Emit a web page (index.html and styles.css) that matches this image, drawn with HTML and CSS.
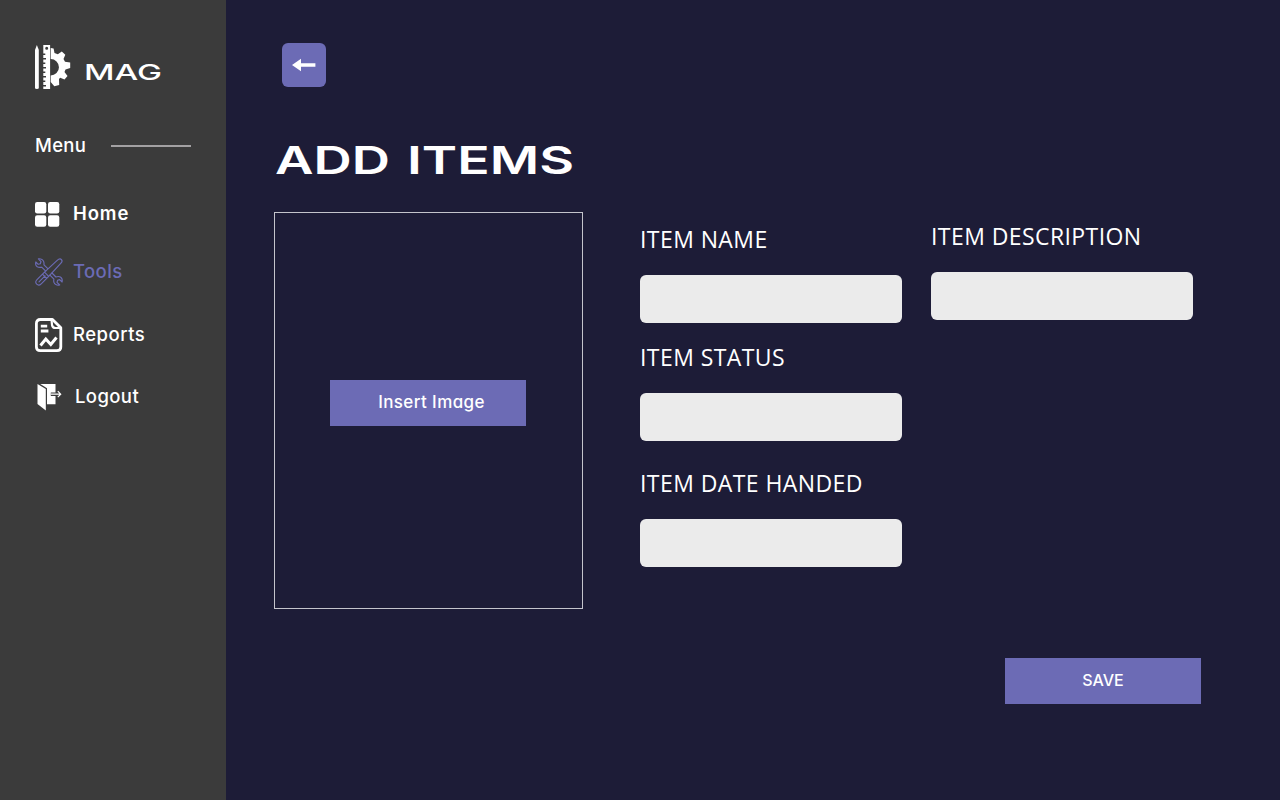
FILE: index.html
```html
<!DOCTYPE html>
<html lang="en">
<head>
<meta charset="utf-8">
<title>MAG - Add Items</title>
<link rel="stylesheet" href="styles.css">
</head>
<body>
<div class="app">
  <aside class="sidebar">
    <div class="brand">
      <svg class="brand-logo" width="36" height="45" viewBox="0 0 36 45" fill="#fff">
        <path d="M0 5L1.9 0L3.8 5V43Q3.8 44 1.9 44Q0 44 0 43Z"/>
        <path fill-rule="evenodd" d="M8.3 0H15.1V44H8.3V41.5H11V40H8.3V37H10.3V35.5H8.3V32.5H11V31H8.3V28H10.3V26.5H8.3V23.5H11V22H8.3V19H10.3V17.5H8.3V14.5H11V13H8.3V10H10.3V8.5H8.3ZM10.2 3.2A1.5 1.5 0 1 0 13.2 3.2A1.5 1.5 0 1 0 10.2 3.2Z"/>
        <path d="M15.7 3L18.6 3.5L19.5 8L22.8 9.3L26.8 6.6L30.3 9.8L28.5 14L30 16.8L35.2 17.6V23L30.5 24.5L29.5 27L32.5 31L29.5 34.5L25.2 32.8L24 34L24.2 40L19.3 41.2L15.7 37V30.5A8.2 8.2 0 0 0 15.7 14Z"/>
      </svg>
      <svg class="brand-name" width="78" height="24" viewBox="0 0 78 24"><text x="0" y="19.7" textLength="78" lengthAdjust="spacingAndGlyphs">MAG</text></svg>
    </div>
    <div class="menu-title"><span>Menu</span><i class="rule"></i></div>
    <nav class="nav">
      <a class="item home">
        <svg width="28" height="25" viewBox="0 0 28 25" fill="#fff"><rect x="0" y="0" width="11.3" height="11.5" rx="2.2"/><rect x="13" y="0" width="11.3" height="11.5" rx="2.2"/><rect x="0" y="13.2" width="11.3" height="11.5" rx="2.2"/><rect x="13" y="13.2" width="11.3" height="11.5" rx="2.2"/></svg>
        <span>Home</span>
      </a>
      <a class="item tools">
        <svg width="28" height="28" viewBox="0 0 28 28" fill="none" stroke="#6b6bb5" stroke-width="1.15" stroke-linejoin="round" stroke-linecap="round">
          <path d="M12.8 10.7L9 6.9Q9.4 2.4 6.5 1.2Q5 .5 3.4.9L6 3.7L5.3 5.8L3.2 6.3L.8 4Q0 7.2 2.3 8.8Q4 9.8 6.7 9.2L10.7 13.2M14.9 17.2L18.9 21.2Q18 25 20.8 26.6Q22.5 27.6 24.7 27L22 24.3L22.6 22.3L24.7 21.6L27.1 24Q27.8 20.6 25.4 19.1Q23.6 18 20.9 19L17 15"/>
          <path d="M9.5 14.2L2 21.7Q-.4 24.2 1.7 26.2Q3.8 28.2 6.2 25.8L13.7 18.3ZM9.5 14.2L22.2 2.4Q24.8-.1 26.5 1.6Q28 3.2 25.5 5.6L13.7 18.3M4 23.8L10 17.8M7.5 16.2L11.7 20.4"/>
        </svg>
        <span>Tools</span>
      </a>
      <a class="item reports">
        <svg width="28" height="36" viewBox="0 0 28 36" fill="none" stroke="#fff" stroke-width="2.8" stroke-linejoin="round">
          <path d="M5.4 2.5H17.5L25.8 10.8V30Q25.8 33.7 22 33.7H5.2Q1.4 33.7 1.4 30V6.4Q1.4 2.5 5.4 2.5Z"/>
          <path d="M16.5 2.5L17 8Q17.5 11 20.5 11H26" stroke-width="2.2"/>
          <path d="M5.8 9.1H12.2M5.8 14H13.4" stroke-width="2.9"/>
          <path d="M5.5 28.5L10.8 22L15.8 27.5L21.5 20.5" stroke-linejoin="miter" stroke-width="3"/>
        </svg>
        <span>Reports</span>
      </a>
      <a class="item logout">
        <svg width="28" height="28" viewBox="0 0 28 28"><path d="M2.5 1L10.8 6V27.5L2.5 21Z" fill="#fff"/><path d="M5.3 1H20.5V9.6H15.8V13H20.5V21.2H12V5.3Z" fill="#fff"/><path d="M15.8 11.2H25.5M22.8 8.2L25.7 11.2L22.8 14.2" fill="none" stroke="#fff" stroke-width="1.2"/></svg>
        <span>Logout</span>
      </a>
    </nav>
  </aside>
  <main class="main">
    <button class="back" aria-label="Back">
      <svg width="24" height="14" viewBox="0 0 24 14" fill="#fff"><path d="M0 7L9 .7V5.2H23.4V8.8H9V13.2Z"/></svg>
    </button>
    <h1 class="title">
      <svg width="310" height="40" viewBox="0 0 310 40"><text x="0" y="34" textLength="115" lengthAdjust="spacingAndGlyphs">ADD</text><text x="132" y="34" textLength="167" lengthAdjust="spacingAndGlyphs">ITEMS</text></svg>
    </h1>
    <div class="content">
      <div class="image-box"><button class="btn insert">Insert Image</button></div>
      <form class="fields">
        <label class="field name"><span>ITEM NAME</span><input type="text"></label>
        <label class="field status"><span>ITEM STATUS</span><input type="text"></label>
        <label class="field date"><span>ITEM DATE HANDED</span><input type="text"></label>
      </form>
      <form class="fields side">
        <label class="field desc"><span>ITEM DESCRIPTION</span><input type="text"></label>
      </form>
    </div>
    <button class="btn save">SAVE</button>
  </main>
</div>
</body>
</html>
```
FILE: styles.css
```css
* { box-sizing: border-box; }
body { margin: 0; background: #1d1c37; color: #fff; font-family: Inter, sans-serif; font-feature-settings: "cv11"; }
button { border: 0; padding: 0; color: #fff; font: inherit; font-feature-settings: inherit; }
svg { display: block; flex: none; overflow: visible; }
.app { display: flex; width: 1280px; height: 800px; overflow: hidden; }

.sidebar { width: 226px; flex: none; background: #3b3b3b; padding: 45px 35px 0; white-space: nowrap; }
.brand { display: flex; gap: 13px; height: 45px; }
.brand-name { margin-top: 15px; font-size: 22px; font-weight: 500; fill: #fff; }
.menu-title { display: flex; align-items: center; justify-content: space-between; height: 40px; margin-top: 36px; font-size: 18.5px; font-weight: 500; letter-spacing: 0.3px; }
.menu-title span, .item span { padding-bottom: 2px; }
.rule { width: 80px; height: 2px; background: #a3a1a3; }
.nav { display: flex; flex-direction: column; margin-top: 28px; font-size: 18.5px; font-weight: 500; letter-spacing: 0.4px; }
.item { display: flex; align-items: center; height: 40px; gap: 10px; }
.home { font-weight: 600; letter-spacing: 0.9px; }
.home svg { margin-top: 1px; }
.tools { margin-top: 18px; color: #6b6bb5; }
.reports { margin-top: 23px; letter-spacing: 0.5px; }
.logout { margin-top: 22px; gap: 12px; }

.main { flex: 1; padding: 43px 0 0 49px; }
.back { display: flex; align-items: center; justify-content: center; width: 44px; height: 44px; margin-left: 7px; border-radius: 6px; background: #6c6bb5; }
.title { height: 40px; margin: 53px 0 0; font-size: 38.5px; font-weight: 600; }
.title text { fill: #fff; }
.content { display: flex; height: 397px; margin-top: 32px; }
.image-box { display: flex; justify-content: center; width: 309px; height: 397px; margin-left: -1px; padding-top: 167px; border: 1px solid #c4c4cc; }
.btn { display: block; width: 196px; height: 46px; background: #6c6bb5; font-size: 16px; font-weight: 500; line-height: 45px; text-align: center; white-space: nowrap; }
.insert { margin-right: 1px; padding: 0 0 2px 7px; font-size: 17px; letter-spacing: 0.4px; }
.fields { width: 262px; margin-left: 57px; padding-top: 12px; }
.side { margin-left: 29px; padding-top: 9px; }
.field { display: block; height: 99px; font-family: "Open Sans", sans-serif; font-size: 23px; font-weight: 400; line-height: 30px; letter-spacing: 0.42px; white-space: nowrap; }
.field span { display: block; height: 51px; }
.field input { display: block; width: 262px; height: 47.5px; border: 0; border-radius: 6px; background: #ebebeb; }
.status { margin-top: 19px; }
.date { margin-top: 27.4px; }
.save { margin: 49px 0 0 730px; padding-bottom: 2px; }
```
